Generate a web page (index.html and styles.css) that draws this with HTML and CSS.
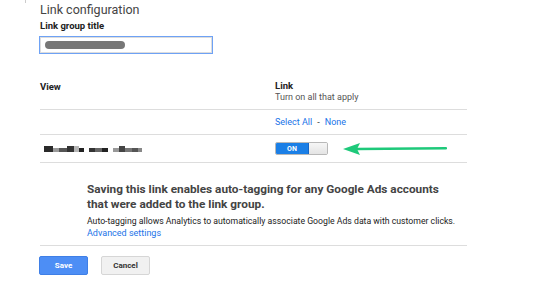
FILE: index.html
```html
<!DOCTYPE html>
<html>
<head>
<meta charset="utf-8">
<link rel="stylesheet" href="styles.css">
</head>
<body>
<div class="page">
  <div class="title">Link configuration</div>
  <div class="label">Link group title</div>
  <div class="input"><span class="redact-pill"></span></div>

  <div class="table">
    <div class="row head">
      <div class="cell view-h">View</div>
      <div class="cell link-h">
        <div class="link-title">Link</div>
        <div class="link-sub">Turn on all that apply</div>
      </div>
    </div>
    <div class="row select">
      <div class="cell"></div>
      <div class="cell"><a class="lnk">Select All</a><span class="dash">-</span><a class="lnk">None</a></div>
    </div>
    <div class="row item">
      <div class="cell">
        <div class="redacted">
          <span class="b t" style="width:9px;background:#2a2a2a"></span><span class="b" style="width:6px;background:#9a9a9a"></span><span class="b" style="width:8px;background:#555"></span><span class="b t" style="width:7px;background:#333"></span><span class="b t" style="width:5px;background:#b5b5b5"></span><span class="b" style="width:5px;background:#222"></span>
          <span class="gap"></span>
          <span class="b" style="width:6px;background:#333"></span><span class="b" style="width:7px;background:#666"></span><span class="b" style="width:6px;background:#222"></span>
          <span class="gap"></span>
          <span class="b" style="width:6px;background:#999"></span><span class="b t" style="width:6px;background:#444"></span><span class="b" style="width:7px;background:#777"></span><span class="b" style="width:6px;background:#555"></span><span class="b" style="width:4px;background:#888"></span>
        </div>
      </div>
      <div class="cell toggle-cell">
        <div class="toggle"><span class="on">ON</span><span class="knob"></span></div>
        <svg class="arrow" width="104" height="14" viewBox="0 0 104 14">
          <path d="M14 7 L103 6.3" stroke="#1ec97a" stroke-width="2.4" fill="none" stroke-linecap="round"/>
          <path d="M0 7 L17 1 L14 7 L17 13 Z" fill="#1ec97a"/>
        </svg>
      </div>
    </div>
  </div>

  <div class="notice">
    <div class="notice-title">Saving this link enables auto-tagging for any Google Ads accounts that were added to the link group.</div>
    <div class="notice-text">Auto-tagging allows Analytics to automatically associate Google Ads data with customer clicks.</div>
    <a class="lnk adv">Advanced settings</a>
  </div>

  <div class="actions">
    <button class="btn save">Save</button>
    <button class="btn cancel">Cancel</button>
  </div>
</div>
</body>
</html>
```
FILE: styles.css
```css
html, body {
  margin: 0;
  padding: 0;
  background: #fff;
}
body {
  font-family: Roboto, "Liberation Sans", Arial, sans-serif;
  color: #333;
}
.page {
  width: 427px;
  margin-left: 40px;
  position: relative;
}
.page::before {
  content: "";
  position: absolute;
  left: -15px;
  top: 0;
  width: 1px;
  height: 3px;
  background: #ccc;
}
.title {
  font-size: 12.5px;
  color: #444;
  line-height: 15px;
  padding-top: 2px;
}
.label {
  font-size: 9.5px;
  font-weight: bold;
  color: #222;
  line-height: 12px;
  margin-top: 3px;
}
.input {
  box-sizing: border-box;
  width: 174px;
  height: 18px;
  margin-top: 4px;
  margin-left: -1px;
  border: 1px solid #6ea2f5;
  box-shadow: inset 1px 1px 0 #ddd, inset -1px -1px 0 #ddd;
  display: flex;
  align-items: center;
  padding-left: 5px;
}
.redact-pill {
  display: block;
  width: 80px;
  height: 8px;
  border-radius: 4px;
  background: #777;
}
.table {
  margin-top: 24px;
}
.row {
  display: grid;
  grid-template-columns: 235px 1fr;
  border-bottom: 1px solid #ddd;
  box-sizing: border-box;
}
.row.head {
  height: 32px;
  align-items: start;
}
.view-h {
  font-size: 9.5px;
  font-weight: bold;
  color: #222;
  padding-top: 3px;
}
.link-title {
  font-size: 9.5px;
  font-weight: bold;
  color: #222;
  line-height: 12px;
  padding-top: 2px;
}
.link-sub {
  font-size: 9px;
  color: #555;
  line-height: 11px;
}
.row.select {
  height: 25px;
  align-items: center;
}
.row.select .cell {
  font-size: 9px;
}
.lnk {
  color: #1a73e8;
  font-size: 9px;
  text-decoration: none;
}
.dash {
  color: #333;
  margin: 0 5px;
}
.row.item {
  height: 28px;
  align-items: center;
}
.redacted {
  display: flex;
  align-items: flex-end;
  margin-left: 4px;
  height: 6px;
}
.redacted .b {
  display: block;
  height: 4px;
}
.redacted .b.t {
  height: 6px;
}
.redacted .gap {
  width: 5px;
}
.toggle-cell {
  display: flex;
  align-items: center;
}
.toggle {
  display: flex;
  width: 53px;
  height: 13px;
  box-sizing: border-box;
  border-radius: 2px;
  overflow: hidden;
  border: 1px solid #b8b8b8;
}
.toggle .on {
  width: 32px;
  background: #1b7fe6;
  color: #fff;
  font-size: 7px;
  font-weight: bold;
  display: flex;
  align-items: center;
  justify-content: center;
  margin: -1px 0 -1px -1px;
  border: 1px solid #1667c8;
}
.toggle .knob {
  flex: 1;
  background: linear-gradient(#f6f6f6, #e4e4e4);
}
.arrow {
  margin-left: 15px;
  display: block;
}
.notice {
  padding-left: 47px;
  padding-top: 19px;
  padding-bottom: 6px;
  border-bottom: 1px solid #ddd;
}
.notice-title {
  font-size: 11.8px;
  font-weight: bold;
  color: #444;
  line-height: 14.5px;
  width: 365px;
}
.notice-text {
  font-size: 8.7px;
  color: #222;
  line-height: 11px;
  margin-top: 5px;
}
.adv {
  display: block;
  font-size: 9px;
  line-height: 11px;
  margin-top: 1px;
}
.actions {
  display: flex;
  gap: 13px;
  margin-top: 10px;
  margin-left: -1px;
}
.btn {
  font-family: Roboto, "Liberation Sans", Arial, sans-serif;
  font-size: 8px;
  font-weight: bold;
  height: 19px;
  width: 49px;
  border-radius: 2px;
  padding: 0;
}
.save {
  background: #4d8ef5;
  border: 1px solid #3f7fe6;
  color: #fff;
}
.cancel {
  background: #f1f1f1;
  border: 1px solid #d6d6d6;
  color: #333;
}
```
